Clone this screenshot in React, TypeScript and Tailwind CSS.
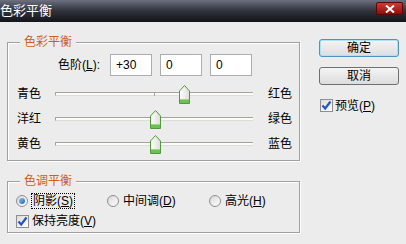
const FONT = "font-['Liberation_Sans','Noto_Sans_CJK_SC',sans-serif]";

const SLIDERS = [
  { left: "青色", right: "红色", value: 30 },
  { left: "洋红", right: "绿色", value: 0 },
  { left: "黄色", right: "蓝色", value: 0 },
];

function Thumb() {
  return (
    <svg width="11" height="19" viewBox="0 0 11 19">
      <defs>
        <linearGradient id="thumbFill" x1="0" y1="0" x2="1" y2="0">
          <stop offset="0" stopColor="#ffffff" />
          <stop offset="1" stopColor="#dcdcd8" />
        </linearGradient>
      </defs>
      <path d="M0.5 6 L5.5 0.5 L10.5 6 V18.5 H0.5 Z" fill="url(#thumbFill)" stroke="#4f9a3c" />
      <rect x="1" y="15" width="9" height="3" fill="#6cc24f" />
      <line x1="1" y1="14.5" x2="10" y2="14.5" stroke="#9ed58a" />
    </svg>
  );
}

function Slider({ value }: { value: number }) {
  const left = 99 + value * 0.99 - 5.5;
  return (
    <div className="relative h-[4px] w-[198px] border-t border-l border-[#a4a49c] border-b border-b-[#dedcd4] bg-[#fbfbfb]">
      <span className="absolute left-[98px] top-[-1px] h-[4px] w-px bg-[#a4a49c]" />
      <span className="absolute top-[-8px]" style={{ left }}>
        <Thumb />
      </span>
    </div>
  );
}

function CheckBox() {
  return (
    <span className="flex h-[13px] w-[13px] items-center justify-center border border-[#8e8f8f] bg-gradient-to-br from-[#dcdcdc] to-white">
      <svg width="11" height="11" viewBox="0 0 11 11">
        <path d="M1.5 5.5 L4.2 8.5 L9.5 1.5" fill="none" stroke="#2155c8" strokeWidth="2.2" />
      </svg>
    </span>
  );
}

function Radio({ checked }: { checked?: boolean }) {
  return (
    <span className="flex h-[12px] w-[12px] shrink-0 items-center justify-center rounded-full border border-[#8e8f8f] bg-gradient-to-br from-[#d8d8d8] to-white">
      {checked && (
        <span className="h-[6px] w-[6px] rounded-full bg-gradient-to-br from-[#8ec2f2] to-[#1d5fc4]" />
      )}
    </span>
  );
}

function GroupBox({
  title,
  className,
  children,
}: {
  title: string;
  className: string;
  children: React.ReactNode;
}) {
  return (
    <div
      className={`relative border border-[#a0a0a0] shadow-[inset_1px_1px_0_#fff,1px_1px_0_#fff] ${className}`}
    >
      <span className="absolute left-[12px] top-[-8px] bg-[#ececec] px-[4px] text-[12px] leading-[14px] text-[#cc5f1e]">
        {title}
      </span>
      {children}
    </div>
  );
}

export default function App() {
  return (
    <div className={`flex h-[244px] w-[406px] flex-col overflow-hidden bg-[#ececec] text-[12px] text-black ${FONT}`}>
      <div className="flex h-[22px] shrink-0 items-start justify-between bg-gradient-to-b from-[#6c7080] via-[#30323b] to-[#14151a]">
        <span className="mt-[3px] text-[13px] leading-[16px] text-white">色彩平衡</span>
        <span className="mr-[3px] mt-[2px] flex h-[13px] w-[27px] items-center justify-center rounded-[2px] border border-[#5c0606] bg-gradient-to-b from-[#d23a32] to-[#8c0c0c]">
          <svg width="10" height="8" viewBox="0 0 10 8">
            <path d="M1 0.5 L9 7.5 M9 0.5 L1 7.5" stroke="#fff" strokeWidth="2" />
          </svg>
        </span>
      </div>

      <div className="flex flex-1">
        <div className="flex w-[300px] flex-col pl-[7px] pt-[20px]">
          <GroupBox title="色彩平衡" className="h-[119px] w-[293px]">
            <div className="flex items-center pt-[11px]">
              <span className="w-[92px] text-right leading-[22px]">
                色阶(<span className="underline">L</span>):
              </span>
              <span className="ml-[10px] h-[22px] w-[42px] border border-[#abadb3] bg-white pl-[5px] leading-[20px]">+30</span>
              <span className="ml-[8px] h-[22px] w-[42px] border border-[#abadb3] bg-white pl-[5px] leading-[20px]">0</span>
              <span className="ml-[8px] h-[22px] w-[42px] border border-[#abadb3] bg-white pl-[5px] leading-[20px]">0</span>
            </div>
            <div className="mt-[5px] flex flex-col">
              {SLIDERS.map((s) => (
                <div key={s.left} className="flex h-[25px] items-center">
                  <span className="w-[47px] pl-[9px]">{s.left}</span>
                  <Slider value={s.value} />
                  <span className="ml-[15px]">{s.right}</span>
                </div>
              ))}
            </div>
          </GroupBox>

          <GroupBox title="色调平衡" className="mt-[20px] h-[52px] w-[293px]">
            <div className="mt-[11px] flex h-[16px] items-center pl-[8px]">
              <span className="flex w-[91px] items-center">
                <Radio checked />
                <span className="ml-[3px] border border-dotted border-black px-px leading-[14px]">
                  阴影(<span className="underline">S</span>)
                </span>
              </span>
              <span className="flex w-[102px] items-center">
                <Radio />
                <span className="ml-[4px] leading-[14px]">
                  中间调(<span className="underline">D</span>)
                </span>
              </span>
              <span className="flex items-center">
                <Radio />
                <span className="ml-[4px] leading-[14px]">
                  高光(<span className="underline">H</span>)
                </span>
              </span>
            </div>
            <div className="mt-[4px] flex h-[16px] items-center pl-[8px]">
              <CheckBox />
              <span className="ml-[3px] leading-[14px]">
                保持亮度(<span className="underline">V</span>)
              </span>
            </div>
          </GroupBox>
        </div>

        <div className="flex flex-col pt-[17px]">
          <button className="ml-[19px] h-[18px] w-[80px] rounded-[3px] border border-[#4a93c4] bg-gradient-to-b from-[#f4f4f4] to-[#dedede] text-[12px] leading-[14px] shadow-[inset_0_0_0_1px_#aee2f8]">
            确定
          </button>
          <button className="ml-[19px] mt-[10px] h-[18px] w-[80px] rounded-[3px] border border-[#707070] bg-gradient-to-b from-[#f4f4f4] to-[#dcdcdc] text-[12px] leading-[14px]">
            取消
          </button>
          <div className="ml-[20px] mt-[14px] flex h-[13px] items-center">
            <CheckBox />
            <span className="ml-[2px] leading-[14px]">
              预览(<span className="underline">P</span>)
            </span>
          </div>
        </div>
      </div>
    </div>
  );
}
